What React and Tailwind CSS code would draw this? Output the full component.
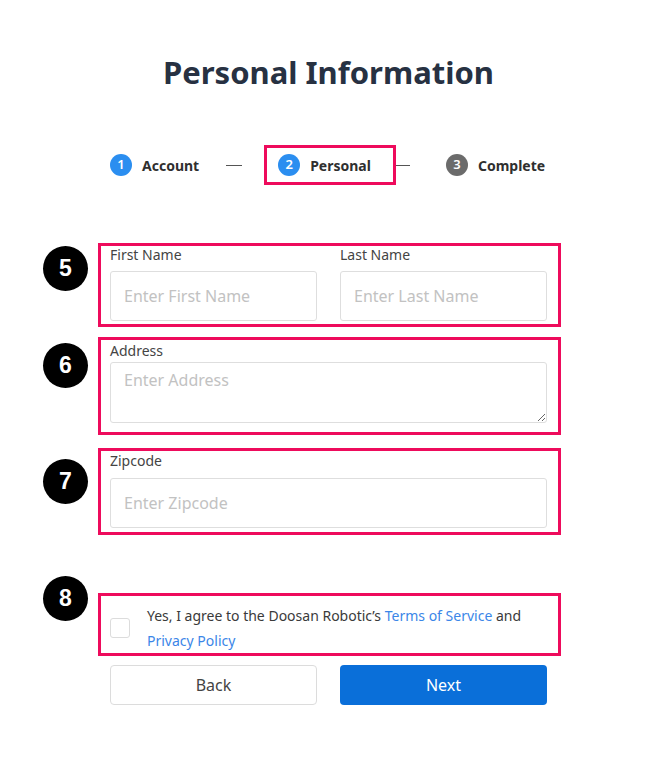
import React from 'react';

const font = { fontFamily: '"Noto Sans", "Open Sans", sans-serif' };

const Marker = ({ n, top }) => (
  <div
    className={`absolute left-[-58px] ${top} w-[45px] h-[45px] rounded-full bg-black text-white flex items-center justify-center text-[23px] font-bold`}
    style={{ fontFamily: '"Liberation Sans", Arial, sans-serif' }}
  >
    {n}
  </div>
);

const Step = ({ n, label, active }) => (
  <div className="flex items-center gap-[10px]">
    <span
      className={`w-[22px] h-[22px] rounded-full flex items-center justify-center text-white text-[13px] font-semibold ${
        active ? 'bg-[#2b8ef0]' : 'bg-[#6b6b6b]'
      }`}
    >
      {n}
    </span>
    <span className="text-[14px] font-bold text-[#2f2f2f]">{label}</span>
  </div>
);

const labelCls = 'block h-[18px] leading-[18px] text-[14px] text-[#444]';
const boxCls = 'relative ml-[-12px] w-[463px] border-[3px] border-[#ee0b5c] pl-[9px] pr-[11px]';
const inputCls =
  'w-full h-[50px] border border-[#dedede] rounded-[3px] px-[13px] text-[16px] text-[#333] placeholder:text-[#c2c2c2] outline-none';

export default function App() {
  return (
    <div className="min-h-[775px] bg-white" style={font}>
      <div className="w-[437px] mx-auto pt-[52px] pb-10">
        <h1 className="h-[40px] leading-[40px] text-center text-[31px] font-bold text-[#273142]">
          Personal Information
        </h1>

        {/* Stepper */}
        <div className="mt-[53px] flex items-center">
          <Step n="1" label="Account" active />
          <span className="ml-[27px] w-[16px] h-px bg-[#555]" />
          <div className="ml-[22px] h-[40px] border-[3px] border-[#ee0b5c] flex items-center pl-[11px] pr-[22px]">
            <Step n="2" label="Personal" active />
          </div>
          <span className="w-[14px] h-px bg-[#555]" />
          <div className="ml-[36px]">
            <Step n="3" label="Complete" />
          </div>
        </div>

        {/* Names */}
        <div className={`${boxCls} mt-[58px] pb-[3px]`}>
          <Marker n="5" top="top-[0px]" />
          <div className="grid grid-cols-2 gap-[23px]">
            <div>
              <label className={labelCls}>First Name</label>
              <input className={`${inputCls} mt-[7px]`} placeholder="Enter First Name" />
            </div>
            <div>
              <label className={labelCls}>Last Name</label>
              <input className={`${inputCls} mt-[7px]`} placeholder="Enter Last Name" />
            </div>
          </div>
        </div>

        {/* Address */}
        <div className={`${boxCls} mt-[10px] pt-[2px] pb-[9px]`}>
          <Marker n="6" top="top-[3px]" />
          <label className={labelCls}>Address</label>
          <textarea
            className="block mt-[2px] w-full h-[61px] border border-[#dedede] rounded-[3px] px-[13px] py-[6px] text-[16px] leading-[22px] placeholder:text-[#c2c2c2] outline-none"
            placeholder="Enter Address"
          />
        </div>

        {/* Zipcode */}
        <div className={`${boxCls} mt-[13px] pt-[1px] pb-[4px]`}>
          <Marker n="7" top="top-[8px]" />
          <label className={labelCls}>Zipcode</label>
          <input className={`${inputCls} mt-[8px] block`} placeholder="Enter Zipcode" />
        </div>

        {/* Agreement */}
        <div className={`${boxCls} mt-[58px] pt-[7px]`}>
          <Marker n="8" top="top-[-20px]" />
          <div className="flex items-center gap-[17px]">
            <span className="shrink-0 w-[20px] h-[20px] border border-[#dcdcdc] rounded-[3px] bg-white" />
            <p className="text-[14px] leading-[25px] text-[#3a3a3a]">
              Yes, I agree to the Doosan Robotic’s{' '}
              <a className="text-[#3b86e8]">Terms of Service</a> and{' '}
              <a className="text-[#3b86e8]">Privacy Policy</a>
            </p>
          </div>
        </div>

        {/* Buttons */}
        <div className="mt-[9px] grid grid-cols-2 gap-[23px]">
          <button className="h-[40px] border border-[#dcdcdc] rounded-[4px] bg-white text-[16px] text-[#444]">
            Back
          </button>
          <button className="h-[40px] rounded-[4px] bg-[#0a6fd9] text-[16px] text-white">Next</button>
        </div>
      </div>
    </div>
  );
}
